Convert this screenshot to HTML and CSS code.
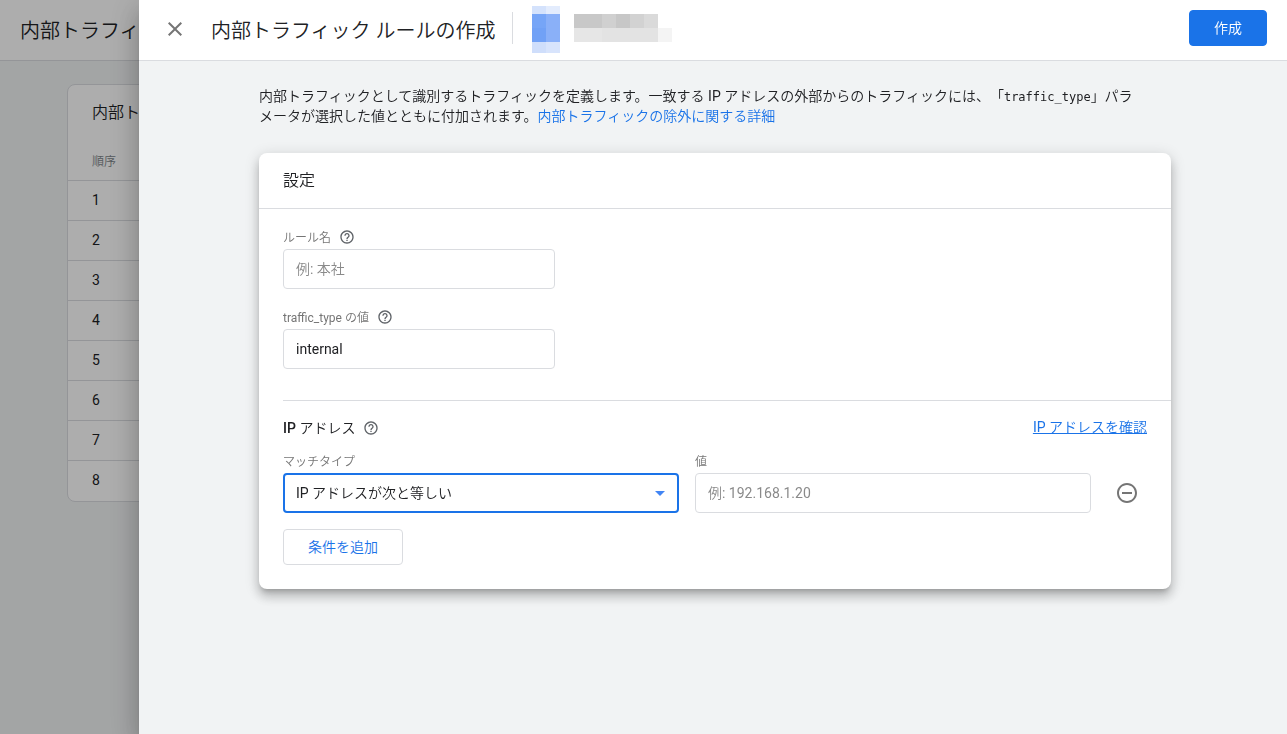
FILE: index.html
```html
<!DOCTYPE html>
<html lang="ja">
<head>
<meta charset="utf-8">
<meta name="viewport" content="width=device-width, initial-scale=1">
<title>内部トラフィック ルールの作成</title>
<link rel="stylesheet" href="styles.css">
</head>
<body>
<svg class="symbols" aria-hidden="true">
  <symbol id="help" viewBox="0 0 24 24">
    <path d="M11 18h2v-2h-2v2zm1-16C6.480 2 2 6.480 2 12s4.480 10 10 10 10-4.480 10-10S17.520 2 12 2zm0 18c-4.410 0-8-3.590-8-8s3.590-8 8-8 8 3.590 8 8-3.590 8-8 8zm0-14c-2.210 0-4 1.790-4 4h2c0-1.100.9-2 2-2s2 .9 2 2c0 2-3 1.750-3 5h2c0-2.250 3-2.500 3-5 0-2.210-1.790-4-4-4z"/>
  </symbol>
</svg>

<div class="backdrop-page">
  <header class="page-header"><h1 class="title">内部トラフィ</h1></header>
  <section class="rules-card">
    <h2 class="rules-title">内部ト</h2>
    <table class="rules-table">
      <thead><tr><th scope="col">順序</th></tr></thead>
      <tbody>
        <tr><td>1</td></tr>
        <tr><td>2</td></tr>
        <tr><td>3</td></tr>
        <tr><td>4</td></tr>
        <tr><td>5</td></tr>
        <tr><td>6</td></tr>
        <tr><td>7</td></tr>
        <tr><td>8</td></tr>
      </tbody>
    </table>
  </section>
</div>

<div class="scrim">
  <main class="sheet">
    <header class="sheet-header">
      <button class="icon-button" type="button" aria-label="閉じる">
        <svg class="icon" viewBox="0 0 24 24"><path d="M19 6.410 17.590 5 12 10.590 6.410 5 5 6.410 10.590 12 5 17.590 6.410 19 12 13.410 17.590 19 19 17.590 13.410 12z"/></svg>
      </button>
      <h1 class="title sheet-title">内部トラフィック ルールの作成</h1>
      <svg class="account" viewBox="0 0 142 48" aria-hidden="true">
        <path fill="#d4e2fc" d="M0 0h14v8H0z"/><path fill="#e3ecfd" d="M14 0h14v8H14z"/>
        <path fill="#76a5f7" d="M0 8h14v14H0z"/><path fill="#8ab0f8" d="M14 8h14v28H14z"/>
        <path fill="#71a1f6" d="M0 22h14v14H0z"/>
        <path fill="#cfdefb" d="M0 36h14v11H0z"/><path fill="#d8e4fc" d="M14 36h14v11H14z"/>
        <path fill="#c8c8c8" d="M42 8h28v14H42z"/><path fill="#d0d0d0" d="M70 8h14v14H70z"/>
        <path fill="#c7c7c7" d="M84 8h14v14H84z"/><path fill="#d2d2d2" d="M98 8h14v14H98z"/>
        <path fill="#dadada" d="M112 8h14v14h-14z"/>
        <path fill="#e6e6e6" d="M42 22h28v14H42z"/><path fill="#e3e3e3" d="M70 22h56v14H70z"/>
        <path fill="#f4f4f4" d="M126 22h14v14h-14z"/>
      </svg>
      <button class="button button-primary" type="button">作成</button>
    </header>

    <div class="sheet-body">
      <p class="intro">内部トラフィックとして識別するトラフィックを定義します。一致する IP アドレスの外部からのトラフィックには、「<code>traffic_type</code>」パラメータが選択した値とともに付加されます。<a href="#">内部トラフィックの除外に関する詳細</a></p>

      <form class="card">
        <h2 class="card-title">設定</h2>
        <div class="card-body">
          <div class="field field-short">
            <label class="label" for="rule-name">ルール名 <svg class="help"><use href="#help"/></svg></label>
            <input class="control" id="rule-name" type="text" placeholder="例: 本社">
          </div>
          <div class="field field-short">
            <label class="label" for="traffic-type">traffic_type の値 <svg class="help"><use href="#help"/></svg></label>
            <input class="control" id="traffic-type" type="text" value="internal">
          </div>

          <section class="conditions">
            <div class="conditions-head">
              <h3 class="conditions-title"><span><b>IP</b> アドレス</span> <svg class="help"><use href="#help"/></svg></h3>
              <a class="check-link" href="#">IP アドレスを確認</a>
            </div>
            <div class="condition">
              <div class="field">
                <label class="label" for="match-type">マッチタイプ</label>
                <div class="select">
                  <select class="control control-active" id="match-type"><option>IP アドレスが次と等しい</option></select>
                  <svg class="caret" viewBox="0 0 10 5"><path d="M0 0h10L5 5z"/></svg>
                </div>
              </div>
              <div class="field">
                <label class="label" for="value">値</label>
                <input class="control" id="value" type="text" placeholder="例: 192.168.1.20">
              </div>
              <button class="icon-button" type="button" aria-label="条件を削除">
                <svg class="icon" viewBox="0 0 24 24"><path d="M7 11v2h10v-2H7zm5-9C6.480 2 2 6.480 2 12s4.480 10 10 10 10-4.480 10-10S17.520 2 12 2zm0 18c-4.410 0-8-3.590-8-8s3.590-8 8-8 8 3.590 8 8-3.590 8-8 8z"/></svg>
              </button>
            </div>
            <button class="button button-outline" type="button">条件を追加</button>
          </section>
        </div>
      </form>
    </div>
  </main>
</div>
</body>
</html>
```

FILE: styles.css
```css
* { box-sizing: border-box; }

body {
  margin: 0;
  min-height: 100vh;
  background: #f1f3f4;
  color: #202124;
  font: 400 14px/20px Roboto, "Noto Sans CJK JP DemiLight", "Noto Sans CJK JP Light", "Noto Sans CJK JP", sans-serif;
}

h1, h2, h3, p { margin: 0; font-weight: 400; }
button, input, select { font: inherit; color: inherit; }
a { color: #1a73e8; text-decoration: none; }

.symbols { display: none; }
.title { font-size: 20px; line-height: 28px; white-space: nowrap; }

/* Rule list behind the sheet */
.page-header {
  display: flex;
  align-items: center;
  height: 61px;
  padding: 2px 20px 0;
  background: #fff;
  border-bottom: 1px solid #dadce0;
}

.rules-card {
  margin: 23px 24px 0 67px;
  padding-bottom: 1px;
  background: #fff;
  border: 1px solid #dadce0;
  border-radius: 8px;
}

.rules-title { padding: 16px 24px 12px; font-size: 16px; line-height: 24px; }
.rules-table { width: 100%; border-collapse: collapse; }
.rules-table th,
.rules-table td { height: 40px; padding: 0 24px; text-align: left; }
.rules-table th { height: 43px; padding-top: 8px; color: #80868b; font-size: 12px; font-weight: 400; }
.rules-table td { border-top: 1px solid #dadce0; }

/* Sheet */
.scrim {
  position: fixed;
  inset: 0;
  padding-left: 139px;
  background: rgba(0, 0, 0, .32);
}

.sheet {
  height: 100%;
  overflow: auto;
  background: #f1f3f4;
  box-shadow: 0 8px 10px -5px rgba(0, 0, 0, .2), 0 16px 24px 2px rgba(0, 0, 0, .14), 0 6px 30px 5px rgba(0, 0, 0, .12);
}

.sheet-header {
  display: flex;
  align-items: center;
  height: 61px;
  padding: 0 20px 4px 16px;
  background: #fff;
  border-bottom: 1px solid #dadce0;
}

.sheet-title {
  margin-left: 16px;
  padding: 6px 16px 0 0;
  border-right: 1px solid #dadce0;
  line-height: 26px;
}

.account { width: 142px; height: 48px; margin: 4px auto 0 19px; }

.icon-button {
  display: grid;
  place-items: center;
  width: 40px;
  height: 40px;
  padding: 0;
  border: 0;
  background: none;
}

.sheet-header .icon-button { margin-top: 2px; }

.icon { width: 24px; height: 24px; fill: #757575; }

.button { height: 36px; padding: 0 24px; border: 1px solid #dadce0; border-radius: 4px; background: #fff; }
.button-primary { border-color: #1a73e8; background: #1a73e8; color: #fff; }
.button-outline { margin-top: 16px; color: #1a73e8; }

.sheet-body { padding: 25px 116px 24px 120px; }
.intro { padding-right: 32px; text-spacing-trim: space-all; }
.intro code { font: 12px/16px "DejaVu Sans Mono", monospace; }

/* Settings card */
.card {
  margin-top: 27px;
  border-radius: 8px;
  background: #fff;
  box-shadow: 0 5px 5px -3px rgba(0, 0, 0, .2), 0 8px 10px 1px rgba(0, 0, 0, .14), 0 3px 14px 2px rgba(0, 0, 0, .12);
}

.card-title { padding: 16px 24px 15px; border-bottom: 1px solid #dadce0; font-size: 16px; line-height: 24px; }
.card-body { display: grid; gap: 16px; padding: 16px 0 24px 24px; }

.label { display: flex; align-items: center; gap: 8px; height: 24px; padding-top: 1px; color: #757575; font-size: 12px; }
.help { width: 16px; height: 16px; fill: #5f6368; }
.label .help { margin-bottom: 1px; }
.field-short { width: 272px; }

.control {
  display: block;
  width: 100%;
  height: 40px;
  padding: 0 12px;
  border: 1px solid #dadce0;
  border-radius: 4px;
  outline: 0;
  background: #fff;
  appearance: none;
}

.control::placeholder { color: #8a8a8a; opacity: 1; }
.control-active { padding: 0 32px 0 11px; border: 2px solid #1a73e8; }
.select { position: relative; }
.caret { position: absolute; top: 18px; right: 14px; width: 10px; height: 5px; fill: #4285f4; pointer-events: none; }

.conditions { margin-top: 15px; padding: 16px 24px 0 0; border-top: 1px solid #dadce0; }
.conditions-head { display: flex; justify-content: space-between; height: 32px; }
.conditions-title { display: flex; align-items: center; gap: 8px; height: 22px; font-size: 14px; }
.conditions-title b { font-weight: 500; }
.check-link { height: 20px; text-decoration: underline; }
.condition { display: grid; grid-template-columns: 1fr 1fr 40px; align-items: end; gap: 16px; }
```
